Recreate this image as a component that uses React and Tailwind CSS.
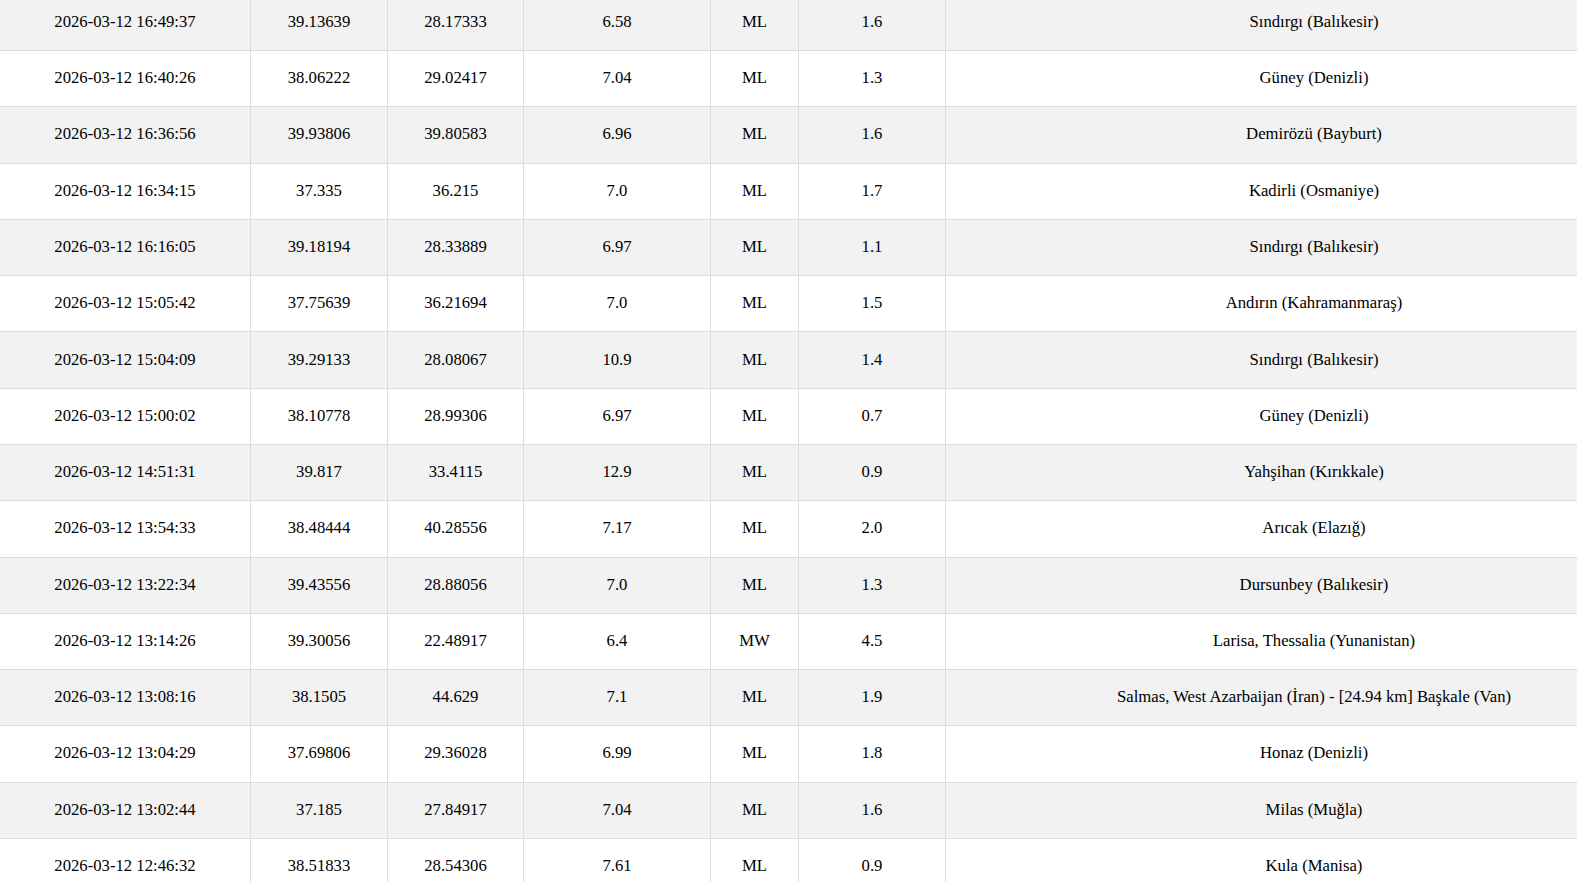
const rows = [
  ['2026-03-12 16:49:37', '39.13639', '28.17333', '6.58', 'ML', '1.6', 'Sındırgı (Balıkesir)'],
  ['2026-03-12 16:40:26', '38.06222', '29.02417', '7.04', 'ML', '1.3', 'Güney (Denizli)'],
  ['2026-03-12 16:36:56', '39.93806', '39.80583', '6.96', 'ML', '1.6', 'Demirözü (Bayburt)'],
  ['2026-03-12 16:34:15', '37.335', '36.215', '7.0', 'ML', '1.7', 'Kadirli (Osmaniye)'],
  ['2026-03-12 16:16:05', '39.18194', '28.33889', '6.97', 'ML', '1.1', 'Sındırgı (Balıkesir)'],
  ['2026-03-12 15:05:42', '37.75639', '36.21694', '7.0', 'ML', '1.5', 'Andırın (Kahramanmaraş)'],
  ['2026-03-12 15:04:09', '39.29133', '28.08067', '10.9', 'ML', '1.4', 'Sındırgı (Balıkesir)'],
  ['2026-03-12 15:00:02', '38.10778', '28.99306', '6.97', 'ML', '0.7', 'Güney (Denizli)'],
  ['2026-03-12 14:51:31', '39.817', '33.4115', '12.9', 'ML', '0.9', 'Yahşihan (Kırıkkale)'],
  ['2026-03-12 13:54:33', '38.48444', '40.28556', '7.17', 'ML', '2.0', 'Arıcak (Elazığ)'],
  ['2026-03-12 13:22:34', '39.43556', '28.88056', '7.0', 'ML', '1.3', 'Dursunbey (Balıkesir)'],
  ['2026-03-12 13:14:26', '39.30056', '22.48917', '6.4', 'MW', '4.5', 'Larisa, Thessalia (Yunanistan)'],
  ['2026-03-12 13:08:16', '38.1505', '44.629', '7.1', 'ML', '1.9', 'Salmas, West Azarbaijan (İran) - [24.94 km] Başkale (Van)'],
  ['2026-03-12 13:04:29', '37.69806', '29.36028', '6.99', 'ML', '1.8', 'Honaz (Denizli)'],
  ['2026-03-12 13:02:44', '37.185', '27.84917', '7.04', 'ML', '1.6', 'Milas (Muğla)'],
  ['2026-03-12 12:46:32', '38.51833', '28.54306', '7.61', 'ML', '0.9', 'Kula (Manisa)'],
];

function App() {
  return (
    <div className="h-[882px] w-full overflow-hidden bg-white font-['Liberation_Serif','Times_New_Roman',serif] text-[16.7px] text-black">
      <div className="-mt-[5.29px] w-[1682px]">
        {rows.map((r, i) => (
          <div
            key={i}
            className={`grid h-[56.29px] grid-cols-[251px_137px_136px_187px_88px_147px_736px] border-b border-[#dddddd] ${i % 2 === 0 ? 'bg-[#f2f2f2]' : 'bg-white'}`}
          >
            {r.map((c, j) => (
              <div
                key={j}
                className={`flex items-center justify-center whitespace-nowrap pb-[2px] ${j < 6 ? 'border-r border-[#dddddd]' : ''}`}
              >
                {c}
              </div>
            ))}
          </div>
        ))}
      </div>
    </div>
  );
}

export default App;
